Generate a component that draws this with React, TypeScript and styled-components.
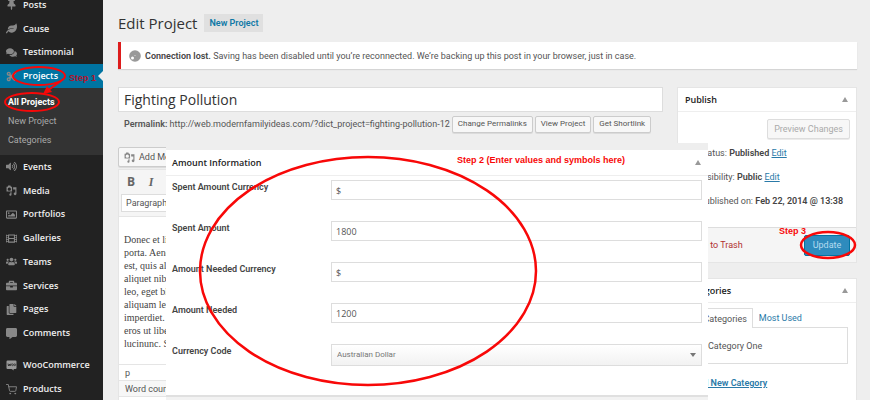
import React from "react";
import styled, { createGlobalStyle } from "styled-components";
import {
  FaThumbtack, FaLeaf, FaComments, FaCut, FaVolumeUp, FaRegImage, FaFilm,
  FaUsers, FaBriefcase, FaCopy, FaCommentAlt,
} from "react-icons/fa";
import { FiShoppingCart } from "react-icons/fi";

const GlobalStyle = createGlobalStyle`
  *, *::before, *::after { box-sizing: border-box; }
  html, body, #root { height: 100%; }
  body {
    margin: 0;
    overflow: hidden;
    background: #eee;
    color: #555;
    font: 9px/12px Roboto, "Open Sans", sans-serif;
  }
  button, input, select { font: inherit; color: inherit; margin: 0; }
  ul, h1, h2, p { margin: 0; padding: 0; font-size: inherit; }
  ul { list-style: none; }
  a { color: #2a7aa8; }
`;

const Page = styled.div`
  position: relative;
  display: flex;
  height: 100vh;
  overflow: hidden;
`;

/* Admin menu */
const Sidebar = styled.nav`
  flex: 0 0 103px;
  margin-top: -7px;
  background: #222;
`;
const MenuGroup = styled.ul<{ $height: number }>`
  display: grid;
  grid-auto-rows: 1fr;
  height: ${(p) => p.$height}px;
`;
const MenuLink = styled.a<{ $active?: boolean }>`
  position: relative;
  display: flex;
  align-items: center;
  gap: 6px;
  height: 100%;
  padding-left: 6px;
  color: ${(p) => (p.$active ? "#fff" : "#eee")};
  background: ${(p) => (p.$active ? "#0074a2" : "transparent")};
  font-family: "Open Sans", sans-serif;
  font-size: 9px;
  font-weight: 600;
  text-decoration: none;
  white-space: nowrap;
  svg { flex: none; width: 11px; height: 11px; color: #888; }
  &::after {
    content: "";
    position: absolute;
    right: 0;
    top: 7px;
    display: ${(p) => (p.$active ? "block" : "none")};
    border: 5px solid transparent;
    border-left: 0;
    border-right-color: #eee;
  }
`;
const SubMenu = styled.ul`
  display: grid;
  grid-auto-rows: 19px;
  height: 67px;
  padding: 5px 0 0 8px;
  background: #333;
`;
const SubLink = styled.a<{ $current?: boolean }>`
  color: ${(p) => (p.$current ? "#fff" : "#aaa")};
  font-weight: ${(p) => (p.$current ? 700 : 400)};
  line-height: 19px;
  text-decoration: none;
`;
const Separator = styled.div`
  height: 8px;
`;

/* Editing screen */
const Main = styled.main`
  flex: 1;
  min-width: 0;
  padding: 11px 13px 0 15px;
`;
const Heading = styled.header`
  display: flex;
  align-items: center;
  gap: 7px;
  height: 24px;
`;
const Title = styled.h1`
  color: #333;
  font-family: "Open Sans", sans-serif;
  font-size: 15px;
  font-weight: 400;
  line-height: 24px;
`;
const TitleAction = styled.button`
  height: 18px;
  padding: 0 5px;
  border: 0;
  background: #e0e0e0;
  color: #0f78a6;
  font-weight: 600;
`;
const Notice = styled.p`
  display: flex;
  align-items: center;
  gap: 4px;
  height: 27px;
  margin: 7px 0 18px;
  padding-left: 8px;
  border-left: 3px solid #dd1c1c;
  background: #fff;
  box-shadow: 0 1px 1px rgba(0, 0, 0, 0.1);
  white-space: nowrap;
  svg { width: 12px; height: 12px; }
  b { font-weight: 600; color: #444; }
`;
const Columns = styled.div`
  display: grid;
  grid-template-columns: minmax(0, 1fr) 180px;
  gap: 14px;
`;
const TitleInput = styled.input`
  display: block;
  width: 100%;
  height: 25px;
  padding: 0 5px;
  border: 1px solid #ddd;
  background: #fff;
  color: #333;
  && {
    font-family: "Open Sans", sans-serif;
    font-size: 14px;
  }
`;
const Permalink = styled.div`
  display: flex;
  align-items: center;
  gap: 2px;
  height: 18px;
  margin: 3px 0 14px;
  padding-left: 6px;
  white-space: nowrap;
  b { font-weight: 600; }
`;
const SmallButton = styled.button`
  height: 17px;
  padding: 0 5px;
  border: 1px solid #ccc;
  border-radius: 2px;
  background: #f7f7f7;
  box-shadow: 0 1px 0 rgba(0, 0, 0, 0.08);
  white-space: nowrap;
  && { font-size: 8px; }
`;
const MediaButton = styled(SmallButton)`
  display: flex;
  align-items: center;
  gap: 4px;
  height: 20px;
  margin-bottom: 2px;
  svg { width: 11px; height: 11px; color: #888; }
  && { font-size: 9px; }
`;
const Editor = styled.section`
  border: 1px solid #e5e5e5;
  background: #fff;
`;
const Toolbar = styled.div`
  height: 47px;
  padding: 0 2px;
  border-bottom: 1px solid #e5e5e5;
  background: #f5f5f5;
`;
const FormatRow = styled.div`
  display: flex;
  height: 24px;
`;
const FormatButton = styled.button<{ $italic?: boolean }>`
  width: 20px;
  padding: 0;
  border: 0;
  background: none;
  color: #666;
  && {
    font-family: ${(p) => (p.$italic ? '"Liberation Serif", serif' : '"Open Sans", sans-serif')};
    font-size: 12px;
    font-style: ${(p) => (p.$italic ? "italic" : "normal")};
    font-weight: 700;
  }
`;
const FormatSelect = styled.select`
  appearance: none;
  width: 90px;
  height: 18px;
  padding: 0 4px;
  border: 1px solid #ddd;
  background: #fff;
`;
const Body = styled.div`
  height: 147px;
  padding: 16px 5px 0;
  color: #444;
  font: 10px/13px "Liberation Serif", serif;
  white-space: pre;
  overflow: hidden;
`;
const StatusLine = styled.div<{ $shaded?: boolean }>`
  height: 16px;
  padding-left: 6px;
  border-top: 1px solid #e5e5e5;
  background: ${(p) => (p.$shaded ? "#f7f7f7" : "#fff")};
  line-height: 16px;
`;
const ExtraBox = styled.div`
  height: 20px;
  border-top: 1px solid #e5e5e5;
  background: #fff;
`;

/* Meta boxes */
const Box = styled.section`
  margin-bottom: 15px;
  border: 1px solid #e5e5e5;
  background: #fff;
`;
const BoxHeader = styled.header`
  display: flex;
  align-items: center;
  justify-content: space-between;
  height: 24px;
  padding: 0 8px 0 7px;
  border-bottom: 1px solid #eee;
  color: #222;
  h2 {
    font-family: "Open Sans", sans-serif;
    font-size: 9px;
    font-weight: 600;
  }
`;
const Toggle = styled.button`
  width: 6px;
  height: 6px;
  padding: 0;
  border: 0;
  background: #999;
  clip-path: polygon(50% 10%, 100% 90%, 0 90%);
`;
const PublishBody = styled.div`
  height: 115px;
  padding: 7px 6px 0 21px;
`;
const PreviewButton = styled(SmallButton)`
  display: block;
  height: 20px;
  margin: 0 0 2px auto;
  padding: 0 6px;
  border-color: #ddd;
  color: #aaa;
  && { font-size: 9px; }
`;
const PublishLine = styled.p`
  line-height: 24px;
  white-space: nowrap;
  b { font-weight: 600; color: #444; }
`;
const PublishFooter = styled.footer`
  display: flex;
  align-items: center;
  justify-content: space-between;
  height: 35px;
  padding: 0 6px 0 8px;
  border-top: 1px solid #ddd;
  background: #f5f5f5;
`;
const TrashLink = styled.a`
  color: #b03030;
  text-decoration: none;
`;
const UpdateButton = styled.button`
  width: 46px;
  height: 21px;
  padding: 0;
  border: 1px solid #0074a2;
  border-radius: 2px;
  background: #2e8bbd;
  color: #b5dcef;
`;
const CategoryBody = styled.div`
  padding: 5px 8px 12px 7px;
`;
const Tabs = styled.div`
  display: flex;
  height: 19px;
`;
const Tab = styled.button<{ $selected?: boolean }>`
  position: relative;
  padding: 0 5px;
  height: ${(p) => (p.$selected ? 20 : 19)}px;
  border: 1px solid ${(p) => (p.$selected ? "#ddd" : "transparent")};
  border-bottom: 0;
  background: ${(p) => (p.$selected ? "#fff" : "none")};
  color: ${(p) => (p.$selected ? "#555" : "#2a7aa8")};
  white-space: nowrap;
`;
const CategoryPanel = styled.div`
  height: 37px;
  margin-bottom: 13px;
  padding: 12px 8px;
  border: 1px solid #ddd;
  label { display: flex; align-items: center; gap: 4px; }
  input { width: 10px; height: 10px; }
`;
const AddLink = styled.a`
  font-weight: 600;
`;

/* Amount panel laid over the editing screen */
const AmountFrame = styled.section`
  position: absolute;
  left: 166px;
  right: 162px;
  top: 143px;
  padding-top: 7px;
  background: #eee;
`;
const AmountBox = styled.div`
  height: 245px;
  background: #fff;
`;
const AmountHeader = styled(BoxHeader)`
  height: 26px;
  padding: 0 7px 0 6px;
`;
const Fields = styled.div`
  display: grid;
  grid-template-columns: 159px minmax(0, 1fr);
  grid-auto-rows: 41px;
  padding: 4px 6px 0;
`;
const FieldLabel = styled.label`
  color: #444;
  font-weight: 600;
  line-height: 14px;
`;
const FieldInput = styled.input`
  width: 100%;
  height: 20px;
  padding: 0 4px;
  border: 1px solid #ddd;
  background: #fff;
  && {
    font-family: "Open Sans", sans-serif;
    font-size: 9px;
  }
`;
const SelectWrap = styled.div`
  position: relative;
  &::after {
    content: "";
    position: absolute;
    right: 6px;
    top: 9px;
    border: 3px solid transparent;
    border-top: 4px solid #777;
    border-bottom: 0;
  }
`;
const FieldSelect = styled.select`
  appearance: none;
  width: 100%;
  height: 22px;
  padding: 0 5px;
  border: 1px solid #ddd;
  background: linear-gradient(#fff, #f2f2f2);
  color: #777;
  && { font-size: 8px; }
`;
const FrameEdge = styled.div`
  height: 12px;
  border-top: 2px solid #e0e0e0;
  background: #f2f2f2;
`;

/* Hand-drawn marks */
const Marks = styled.svg`
  position: absolute;
  left: 0;
  top: 0;
  pointer-events: none;
  fill: none;
  stroke: #f80808;
`;
const Note = styled.span<{ $x: number; $y: number; $dark?: boolean }>`
  position: absolute;
  left: ${(p) => p.$x}px;
  top: ${(p) => p.$y}px;
  color: ${(p) => (p.$dark ? "#b5122a" : "#f80808")};
  font: 700 9px/12px "Liberation Sans", sans-serif;
  white-space: nowrap;
`;

const MediaIcon = () => (
  <svg viewBox="0 0 20 20" fill="currentColor" aria-hidden="true">
    <path fillRule="evenodd" d="M1 3h2l1-2h4l1 2h2v9H1zM6 4.5a3 3 0 1 0 0 6 3 3 0 0 0 0-6z" />
    <path d="M13 4h6v12a2.5 2.5 0 1 1-2-2.5V8h-4zM8 13h2v4a2 2 0 1 1-2-1.500z" />
  </svg>
);
const WooIcon = () => (
  <svg viewBox="0 0 22 22" aria-hidden="true">
    <path d="M3 1h16a2 2 0 0 1 2 2v13a2 2 0 0 1-2 2h-4l1 3-5-3H3a2 2 0 0 1-2-2V3a2 2 0 0 1 2-2z" fill="#999" />
    <path d="M4 7l1 5 2-4 1 4 2-5" fill="none" stroke="#222" strokeWidth="1.500" />
    <circle cx="13" cy="9.500" r="1.800" fill="none" stroke="#222" strokeWidth="1.300" />
    <circle cx="17.500" cy="9.500" r="1.800" fill="none" stroke="#222" strokeWidth="1.300" />
  </svg>
);
const SpinnerIcon = () => (
  <svg viewBox="0 0 12 12" aria-hidden="true">
    <circle cx="6" cy="6" r="5.800" fill="#999" />
    <circle cx="3.500" cy="8" r="1.500" fill="#fff" />
    <circle cx="6" cy="5.500" r=".6" fill="#ddd" />
  </svg>
);

type Entry = [string, React.ComponentType];
const topItems: Entry[] = [
  ["Posts", FaThumbtack], ["Cause", FaLeaf], ["Testimonial", FaComments], ["Projects", FaCut],
];
const middleItems: Entry[] = [
  ["Events", FaVolumeUp], ["Media", MediaIcon], ["Portfolios", FaRegImage], ["Galleries", FaFilm],
  ["Teams", FaUsers], ["Services", FaBriefcase], ["Pages", FaCopy], ["Comments", FaCommentAlt],
];
const shopItems: Entry[] = [["WooCommerce", WooIcon], ["Products", FiShoppingCart]];

const Menu = ({ items, height }: { items: Entry[]; height: number }) => (
  <MenuGroup $height={height}>
    {items.map(([name, Icon]) => (
      <li key={name}>
        <MenuLink href="#" $active={name === "Projects"}><Icon />{name}</MenuLink>
      </li>
    ))}
  </MenuGroup>
);

const fields = [
  ["Spent Amount Currency", "$"],
  ["Spent Amount", "1800"],
  ["Amount Needed Currency", "$"],
  ["Amount Needed", "1200"],
];

const excerpt = `Donec et libero
porta. Aenean
est, quis aliquam
aliquet nibh
leo, eget blandit
aliquam leo
imperdiet. Cras
eros ut libero
lucinunc. Sed`;

export default function App() {
  return (
    <Page>
      <GlobalStyle />
      <Sidebar>
        <Menu items={topItems} height={95} />
        <SubMenu>
          <li><SubLink href="#" $current>All Projects</SubLink></li>
          <li><SubLink href="#">New Project</SubLink></li>
          <li><SubLink href="#">Categories</SubLink></li>
        </SubMenu>
        <Menu items={middleItems} height={190} />
        <Separator />
        <Menu items={shopItems} height={48} />
      </Sidebar>

      <Main>
        <Heading>
          <Title>Edit Project</Title>
          <TitleAction>New Project</TitleAction>
        </Heading>
        <Notice>
          <SpinnerIcon />
          <span><b>Connection lost.</b> Saving has been disabled until you’re reconnected. We’re backing up this post in your browser, just in case.</span>
        </Notice>
        <Columns>
          <div>
            <TitleInput aria-label="Project title" defaultValue="Fighting Pollution" />
            <Permalink>
              <span><b>Permalink:</b> http://web.modernfamilyideas.com/?dict_project=fighting-pollution-12</span>
              <SmallButton>Change Permalinks</SmallButton>
              <SmallButton>View Project</SmallButton>
              <SmallButton>Get Shortlink</SmallButton>
            </Permalink>
            <MediaButton><MediaIcon />Add Media</MediaButton>
            <Editor>
              <Toolbar>
                <FormatRow>
                  <FormatButton>B</FormatButton>
                  <FormatButton $italic>I</FormatButton>
                </FormatRow>
                <FormatSelect aria-label="Text style"><option>Paragraph</option></FormatSelect>
              </Toolbar>
              <Body>{excerpt}</Body>
              <StatusLine>p</StatusLine>
              <StatusLine $shaded>Word count: 54</StatusLine>
              <ExtraBox />
            </Editor>
          </div>
          <aside>
            <Box>
              <BoxHeader><h2>Publish</h2><Toggle aria-label="Toggle Publish" /></BoxHeader>
              <PublishBody>
                <PreviewButton disabled>Preview Changes</PreviewButton>
                <PublishLine>Status: <b>Published</b> <a href="#">Edit</a></PublishLine>
                <PublishLine>Visibility: <b>Public</b> <a href="#">Edit</a></PublishLine>
                <PublishLine>Published on: <b>Feb 22, 2014 @ 13:38</b></PublishLine>
              </PublishBody>
              <PublishFooter>
                <TrashLink href="#">Move to Trash</TrashLink>
                <UpdateButton>Update</UpdateButton>
              </PublishFooter>
            </Box>
            <Box>
              <BoxHeader><h2>Categories</h2><Toggle aria-label="Toggle Categories" /></BoxHeader>
              <CategoryBody>
                <Tabs>
                  <Tab $selected>All Categories</Tab>
                  <Tab>Most Used</Tab>
                </Tabs>
                <CategoryPanel>
                  <label><input type="checkbox" />Category One</label>
                </CategoryPanel>
                <AddLink href="#">+ Add New Category</AddLink>
              </CategoryBody>
            </Box>
          </aside>
        </Columns>
      </Main>

      <AmountFrame>
        <AmountBox>
          <AmountHeader><h2>Amount Information</h2><Toggle aria-label="Toggle Amount Information" /></AmountHeader>
          <Fields>
            {fields.map(([label, value]) => (
              <React.Fragment key={label}>
                <FieldLabel htmlFor={label}>{label}</FieldLabel>
                <div><FieldInput id={label} defaultValue={value} /></div>
              </React.Fragment>
            ))}
            <FieldLabel htmlFor="code">Currency Code</FieldLabel>
            <SelectWrap>
              <FieldSelect id="code"><option>Australian Dollar</option></FieldSelect>
            </SelectWrap>
          </Fields>
        </AmountBox>
        <FrameEdge />
      </AmountFrame>

      <Marks width="870" height="400" strokeWidth="2.500" aria-hidden="true">
        <ellipse cx="39" cy="76" rx="26" ry="9" strokeWidth="2" />
        <ellipse cx="32" cy="102" rx="27" ry="9" strokeWidth="2" />
        <path d="M61 81L47 91" strokeWidth="2" />
        <path d="M43 94l4-8 5 6z" fill="#f80808" stroke="none" />
        <ellipse cx="368" cy="271" rx="168" ry="114" />
        <ellipse cx="828" cy="245" rx="27" ry="13" />
      </Marks>
      <Note $x={69} $y={72} $dark>Step 1</Note>
      <Note $x={457} $y={154}>Step 2 (Enter values and symbols here)</Note>
      <Note $x={779} $y={225}>Step 3</Note>
    </Page>
  );
}
